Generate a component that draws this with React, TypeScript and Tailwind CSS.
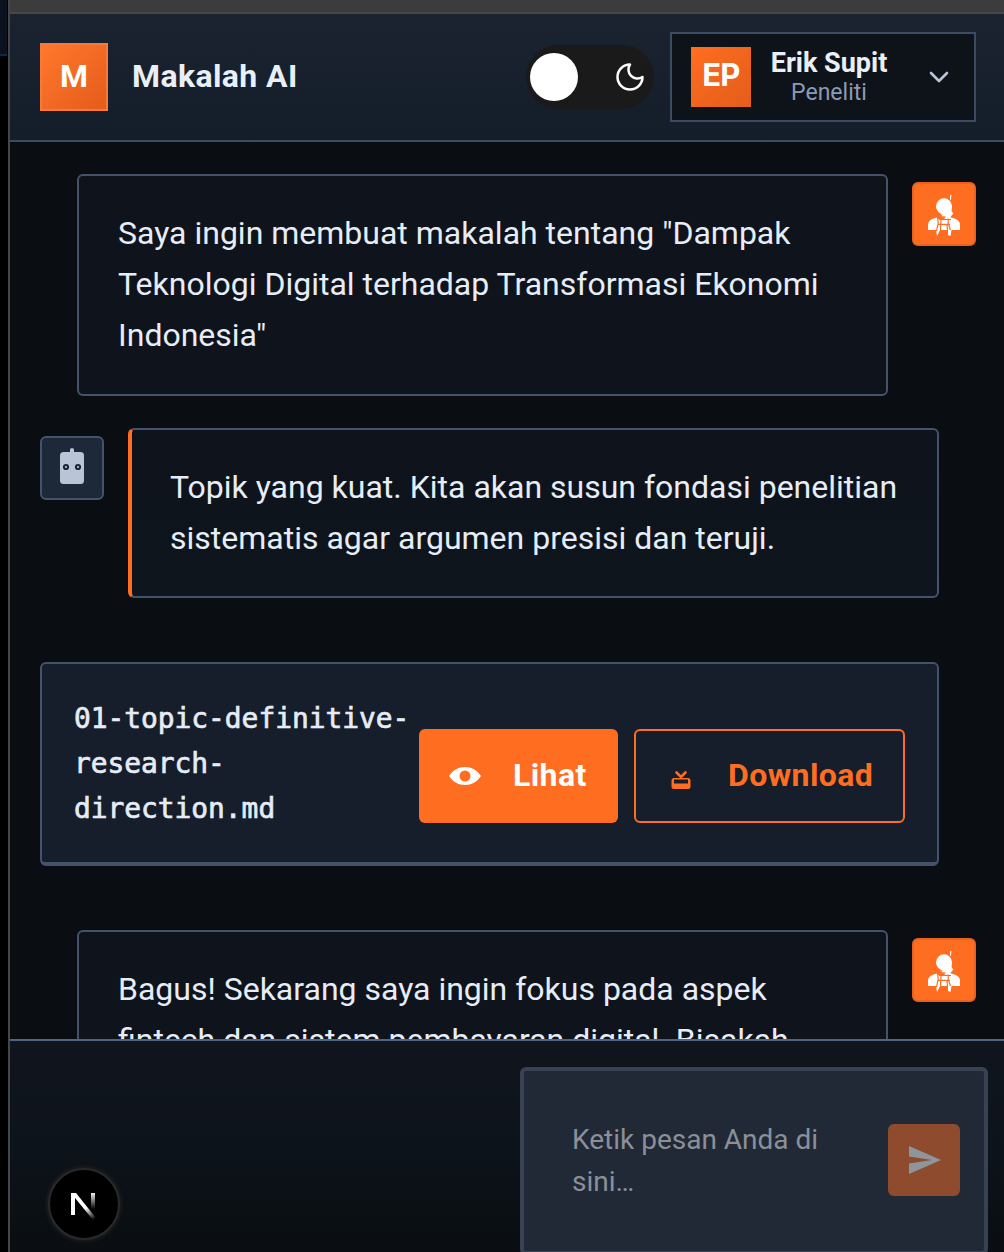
import React from "react";

function UserAvatar() {
  return (
    <div className="mt-2 flex h-16 w-16 shrink-0 items-center justify-center rounded-md border-2 border-[#ea601f] bg-[#ff6d20]">
      <svg width="60" height="60" viewBox="0 0 60 60" fill="#fff">
        <circle cx="30" cy="22.3" r="8" />
        <path d="M36 11.500 37.500 10.500 37 15 36 16.500Z" />
        <path d="M30 22h8l-.5 5 1.800 2.500L36.500 33l1 3h-6l-3-1 3.500-2.500-6-.5Z" />
        <path d="M14 46v-5c0-4.500 4-6.500 9-7.500h14c5 1 9 3 9 7.500v5Z" />
        <path d="M22 46h4l-3 6Zm12 0h3.500l-1 6-2.500-1Z" />
        <path d="M24 30.500h5l-3 2.500 6 .5-2 1.500h-6Z" fill="#ff6d20" />
        <path d="M23.500 33l.7 6-1.700 8M26.500 46l.5-10M34.200 34.500v5l2.300 6.500M33.500 46l-.5-5M25 35.500h12M24 40.300h12" fill="none" stroke="#ff6d20" strokeWidth="1.200" />
      </svg>
    </div>
  );
}

function BotAvatar() {
  return (
    <div className="mt-2 flex h-16 w-16 shrink-0 items-center justify-center rounded-md border-2 border-[#42536b] bg-[#1d2838]">
      <svg width="60" height="60" viewBox="0 0 60 60">
        <rect x="28" y="10" width="4" height="8" rx="2" fill="#b9c5d6" />
        <rect x="18" y="14" width="24" height="32" rx="3.500" fill="#b9c5d6" />
        <g fill="#b9c5d6" stroke="#1d2838" strokeWidth="2">
          <circle cx="24" cy="29" r="2.100" />
          <circle cx="36" cy="29" r="2.100" />
        </g>
      </svg>
    </div>
  );
}

function Header() {
  return (
    <header className="flex h-32 shrink-0 items-center border-b-2 border-[#3b4b61] bg-linear-to-b from-[#1a232f] to-[#141e2a] pr-7 pl-[30px]">
      <div className="flex h-[68px] w-[68px] items-center justify-center border-2 border-[#f97a38] bg-linear-to-br from-[#ff782c] to-[#e55c1b] pb-0.5 text-[32px] font-bold text-white">
        M
      </div>
      <h1 className="ml-6 pb-0.5 text-[32px] font-bold tracking-[0.400px] text-[#e9eff7]">Makalah AI</h1>
      <div className="ml-auto flex h-16 w-32 items-center justify-between rounded-full bg-[#1a1a1a] pr-2.5 pl-1">
        <div className="h-12 w-12 rounded-full bg-white" />
        <svg width="28" height="28" viewBox="0 0 28 28" fill="none" stroke="#fff" strokeWidth="2.500" strokeLinejoin="round">
          <path d="M14 1.500A12.500 12.500 0 1 0 26.500 14 9 9 0 0 1 14 1.500Z" />
        </svg>
      </div>
      <div className="ml-4 flex h-[90px] w-[306px] items-center border-2 border-[#3b4b61] bg-[#0e131a] pl-[19px]">
        <div className="flex h-[60px] w-[60px] items-center justify-center bg-linear-to-br from-[#ff6d20] to-[#e35d1b] pb-[3px] font-['Inter'] text-[31px] font-bold tracking-[-0.800px] text-white">
          EP
        </div>
        <div className="ml-[18px] flex w-[120px] flex-col items-center whitespace-nowrap">
          <span className="text-[27px] leading-[31px] font-bold text-[#e9eff9]">Erik Supit</span>
          <span className="text-[23px] leading-[28px] text-[#8b9bb3]">Peneliti</span>
        </div>
        <svg className="ml-[39px]" width="22" height="14" viewBox="0 0 22 14" fill="none" stroke="#b9c5d6" strokeWidth="2.600" strokeLinecap="round" strokeLinejoin="round">
          <path d="m3 3 8 8 8-8" />
        </svg>
      </div>
    </header>
  );
}

function FileCard() {
  return (
    <section className="mt-16 flex h-[204px] w-[899px] shrink-0 items-center rounded-md border-2 border-b-4 border-[#42536b] bg-[#151e2a] px-8">
      <div className="w-[345px] shrink-0 font-['DejaVu_Sans_Mono',monospace] text-[27.900px] leading-[45px] tracking-[-0.030px] text-[#e5ecf5] [-webkit-text-stroke:0.700px_#e5ecf5]">
        01-topic-definitive-
        <br />
        research-
        <br />
        direction.md
      </div>
      <button className="mt-[26px] flex h-[94px] w-[199px] shrink-0 items-center rounded-md bg-[#ff6d20] pl-[29px] text-[32px] font-bold tracking-[0.400px] text-white">
        <svg width="34" height="20" viewBox="0 0 34 20" fill="#fff">
          <path fillRule="evenodd" d="M1 10C5 4 10.500 1 17 1s12 3 16 9c-4 6-9.500 9-16 9S5 16 1 10Zm10.500 0a5.500 5.500 0 1 0 11 0 5.500 5.500 0 0 0-11 0Z" />
        </svg>
        <span className="ml-[31px]">Lihat</span>
      </button>
      <button className="mt-[26px] ml-4 flex h-[94px] w-[271px] shrink-0 items-center rounded-md border-2 border-[#ff6d20] pl-[35px] text-[32px] font-bold tracking-[0.400px] text-[#ff6d20]">
        <svg className="mt-2" width="20" height="20" viewBox="0 0 20 20" fill="none" stroke="#ff6d20">
          <path d="m5.500 2.500 4.500 4.500L14.500 2.500" strokeWidth="2.600" strokeLinecap="round" />
          <path fill="#ff6d20" stroke="none" fillRule="evenodd" d="M3 8h14a2.500 2.500 0 0 1 2.500 2.500v6A2.500 2.500 0 0 1 17 19H3a2.500 2.500 0 0 1-2.500-2.500v-6A2.500 2.500 0 0 1 3 8Zm0 1.500v4h14v-4Z" />
        </svg>
        <span className="ml-[37px]">Download</span>
      </button>
    </section>
  );
}

function Footer() {
  return (
    <footer className="flex h-[213px] shrink-0 items-start justify-between overflow-hidden border-t-2 border-[#506484] bg-linear-to-b from-[#10151e] via-[#0d131a] to-[#0a0e12] pr-4 pl-[38px]">
      <div className="mt-[127px] flex h-[72px] w-[72px] items-center justify-center rounded-full border-2 border-[#292929] bg-black shadow-[0_0_4px_1px_#222]">
        <svg width="28" height="32" viewBox="0 0 28 32" fill="none">
          <defs>
            <linearGradient id="stem" x1="0" y1="4" x2="0" y2="21" gradientUnits="userSpaceOnUse">
              <stop stopColor="#fff" />
              <stop offset="1" stopColor="#fff" stopOpacity="0" />
            </linearGradient>
            <linearGradient id="diagonal" x1="17" y1="19" x2="25" y2="31" gradientUnits="userSpaceOnUse">
              <stop stopColor="#fff" />
              <stop offset="1" stopColor="#fff" stopOpacity="0" />
            </linearGradient>
          </defs>
          <path d="M1 5h4v22H1Z" fill="#fff" />
          <path d="M1 5h5l20 25-3 2L1 5Z" fill="url(#diagonal)" />
          <path d="M21 5h4v16h-4Z" fill="url(#stem)" />
        </svg>
      </div>
      <div className="mt-[26px] flex h-[188px] w-[468px] shrink-0 items-center rounded-md border-4 border-[#394252] bg-[#212936] pr-6 pl-12">
        <div className="w-[316px] pr-14 text-[28px] leading-[42px] text-[#8b9098]">Ketik pesan Anda di sini…</div>
        <button className="mb-0.5 flex h-[72px] w-[72px] shrink-0 items-center justify-center rounded-md bg-[#8f4b2d] pl-0.5">
          <svg width="32" height="28" viewBox="0 0 32 28" fill="#8f959d">
            <path d="M0 0 32 14 0 28V17.500L23 14 0 10.500Z" />
          </svg>
        </button>
      </div>
    </footer>
  );
}

export default function App() {
  return (
    <div className="flex h-[1252px] w-[1004px] overflow-hidden bg-black font-['Roboto',sans-serif]">
      <aside className="w-2 shrink-0">
        <div className="mr-px h-14 border-b-2 border-[#0d2948] bg-[#0b121d]" />
      </aside>
      <div className="flex min-w-0 flex-1 flex-col border-l-2 border-[#444648] bg-[#0a0e12]">
        <div className="-ml-0.5 h-3.5 shrink-0 border-b-2 border-l-2 border-[#474747] bg-[#3c3c3c]" />
        <Header />
        <main className="flex h-[897px] flex-col overflow-hidden pt-8 pr-7 pl-[30px] text-[32px] leading-[51.200px] text-[#e7edf7]">
          <div className="flex shrink-0 justify-end gap-6">
            <div className="h-[222px] w-[811px] rounded-md border-2 border-[#42536b] bg-[#0f141c] px-[39px] py-8">
              Saya ingin membuat makalah tentang "Dampak
              <br />
              Teknologi Digital terhadap Transformasi Ekonomi
              <br />
              Indonesia"
            </div>
            <UserAvatar />
          </div>
          <div className="mt-8 flex shrink-0 gap-6">
            <BotAvatar />
            <div className="h-[170px] w-[811px] rounded-md border-2 border-l-4 border-[#42536b] border-l-[#ff6d20] bg-linear-to-b from-[#0f131b] to-[#0e151c] pt-8 pl-[38px] whitespace-nowrap">
              Topik yang kuat. Kita akan susun fondasi penelitian
              <br />
              sistematis agar argumen presisi dan teruji.
            </div>
          </div>
          <FileCard />
          <div className="mt-16 flex shrink-0 justify-end gap-6">
            <div className="h-[222px] w-[811px] rounded-md border-2 border-[#42536b] bg-[#0f141c] px-[39px] py-8">
              Bagus! Sekarang saya ingin fokus pada aspek
              <br />
              fintech dan sistem pembayaran digital. Bisakah
            </div>
            <UserAvatar />
          </div>
        </main>
        <Footer />
      </div>
    </div>
  );
}
